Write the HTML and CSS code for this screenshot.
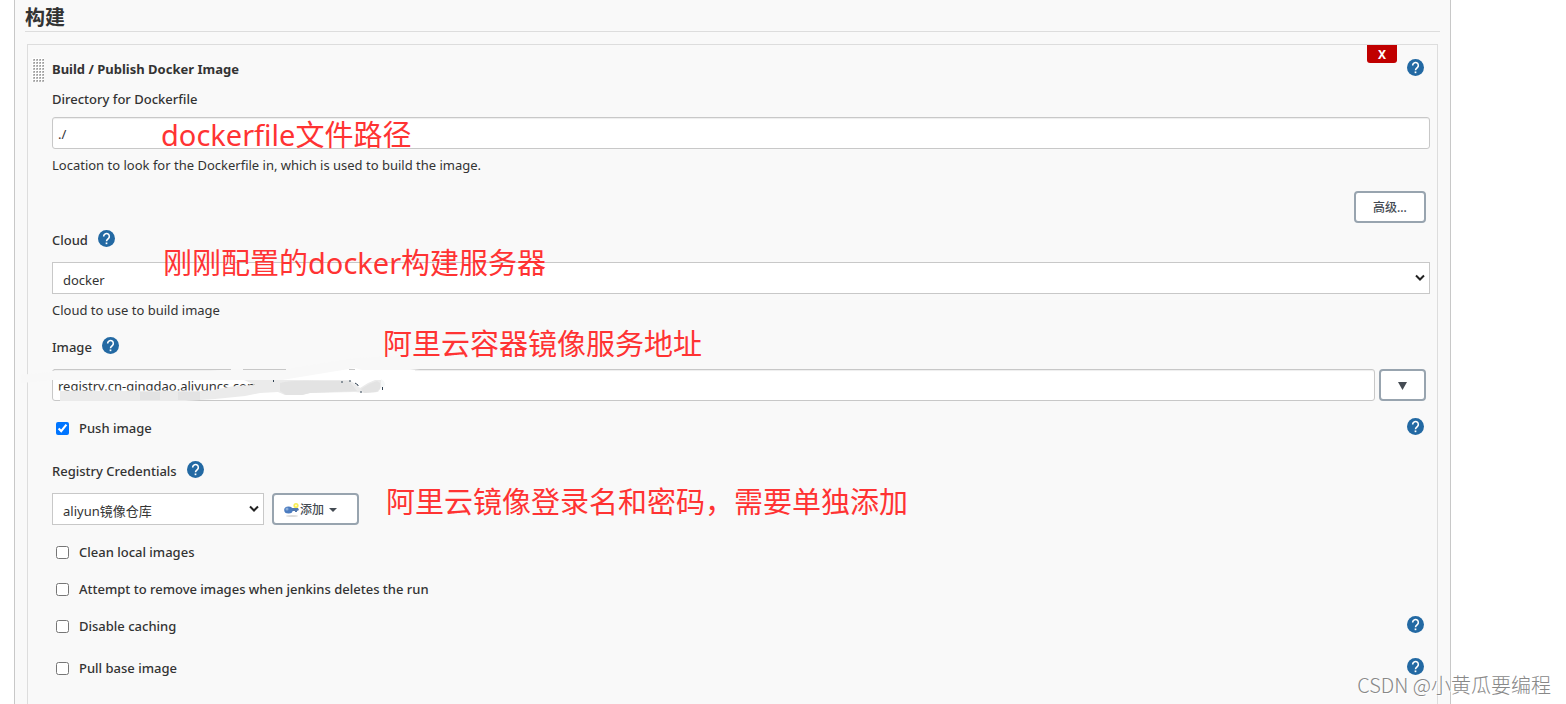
FILE: index.html
```html
<!DOCTYPE html>
<html lang="zh-CN">
<head>
<meta charset="utf-8">
<title>构建</title>
<link rel="stylesheet" href="styles.css">
</head>
<body>
<svg class="defs" aria-hidden="true">
  <symbol id="help" viewBox="0 0 24 24">
    <circle cx="12" cy="12" r="12" fill="#2369a3"/>
    <path d="M8 9.200a4 4 0 1 1 6.600 2.900c-1.700 1.400-2.600 1.900-2.600 3.700" fill="none" stroke="#fff" stroke-width="2.200"/>
    <rect x="10.800" y="17.600" width="2.400" height="2.400" fill="#fff"/>
  </symbol>
</svg>
<main class="panel">
  <h1 class="section-title">构建</h1>
  <form class="step">
    <button type="button" class="remove">X</button>
    <div class="row title-row">
      <svg class="grip" viewBox="0 0 12 24" aria-hidden="true">
        <defs><pattern id="dots" width="3" height="3" patternUnits="userSpaceOnUse"><path fill="#fff" d="M0 0h3v3H0z"/><path fill="#bbb" d="M1 1h2v2H1z"/><path fill="#999" d="M2 1h1v1H2z"/></pattern></defs>
        <path fill="url(#dots)" d="M0 0h12v24H0z"/>
      </svg>
      <h2 class="step-title">Build / Publish Docker Image</h2>
      <a class="help end" href="#" aria-label="Help"><svg><use href="#help"/></svg></a>
    </div>

    <div class="row label-row"><label for="dir">Directory for Dockerfile</label></div>
    <div class="control">
      <input id="dir" class="text" type="text" value="./">
      <span class="note note-dir">dockerfile文件路径</span>
    </div>
    <p class="hint">Location to look for the Dockerfile in, which is used to build the image.</p>
    <div class="actions"><button type="button" class="btn advanced">高级...</button></div>

    <div class="row"><label for="cloud">Cloud</label><a class="help" href="#" aria-label="Help"><svg><use href="#help"/></svg></a></div>
    <div class="control cloud-control">
      <select id="cloud" class="select"><option>docker</option></select>
      <svg class="chevron" viewBox="0 0 10 8"><path d="M1 1.500l4 4 4-4"/></svg>
      <span class="note note-cloud">刚刚配置的docker构建服务器</span>
    </div>
    <p class="hint">Cloud to use to build image</p>

    <div class="row image-label"><label for="image">Image</label><a class="help" href="#" aria-label="Help"><svg><use href="#help"/></svg></a></div>
    <div class="control image-control">
      <input id="image" class="text" type="text" value="registry.cn-qingdao.aliyuncs.com">
      <button type="button" class="btn expand" aria-label="Expand"><svg viewBox="0 0 9 8"><path d="M0 0h9L4.500 8z"/></svg></button>
      <svg class="smear" viewBox="0 0 400 50" aria-hidden="true">
        <path fill="#f8f8f8" d="M0 20Q16 18 32 17V16H190L211 14H223L266 14 335 3 400 0V14L380 16 345 19 300 25H32L2 28z"/>
        <path fill="#fff" d="M34 25H262L335 13 342 15 395 15V24L345 27 300 26 240 26H34z"/>
        <path fill="#fff" d="M38 35.500H236V27L244 26H370V38H240L230 44H38z"/>
        <path fill="#c8c8c8" d="M34 14H211V15H34zM223 14H266V15H223zM329 14H335V15H329z"/>
        <path fill="#ebebeb" d="M40 36H190Q210 30 235 30L224 25H329L334 28 340 33 348 28 355 25 361 25 362 31 358 37 345 38 335 37 290 38 282 40 265 40 258 37 240 38 225 41 195 44 165 46H40z"/>
        <path fill="#e3e3e3" d="M120 37h20v8h-20zM158 37h22v8h-22zM260 28Q270 25 300 26H329L337 36 290 38 282 40H266L260 36zM341 34l8-5 8-3 3 2v6l-4 3-12 1z"/>
        <path fill="#f6f8f8" d="M361 24q4 2 4 6l-3 4-1-3z"/>
        <path fill="none" stroke="#345" d="M253.500 25v2M321 27h2M329 26h2M335 28l3 2v1M341 36v2M362.500 32v3"/>
      </svg>
      <span class="note note-image">阿里云容器镜像服务地址</span>
    </div>

    <div class="row check push"><input id="push" type="checkbox" checked><label for="push">Push image</label><a class="help end" href="#" aria-label="Help"><svg><use href="#help"/></svg></a></div>

    <div class="row cred-label"><label for="cred">Registry Credentials</label><a class="help" href="#" aria-label="Help"><svg><use href="#help"/></svg></a></div>
    <div class="control cred-control">
      <div class="cred-select">
        <select id="cred" class="select"><option>aliyun镜像仓库</option></select>
        <svg class="chevron" viewBox="0 0 10 8"><path d="M1 1.500l4 4 4-4"/></svg>
      </div>
      <button type="button" class="btn add">
        <svg class="key" viewBox="0 0 16 16"><ellipse cx="8" cy="14" rx="6" ry="1" fill="#ddd"/><path d="M5 6h9l1 2-2 1v1h-2V9H7z" fill="#5378ad"/><ellipse cx="4.500" cy="8" rx="4.300" ry="3.500" fill="#4c7cc0"/><circle cx="3" cy="7" r="1.500" fill="#8badd8"/><circle cx="12" cy="3.500" r="2.600" fill="#f8ed55"/><circle cx="12" cy="3.500" r="1" fill="#fffbd0"/></svg>
        <span>添加</span>
        <svg class="caret" viewBox="0 0 8 4"><path d="M0 0h8L4 4z"/></svg>
      </button>
      <span class="note note-cred">阿里云镜像登录名和密码，需要单独添加</span>
    </div>

    <div class="row check clean"><input id="clean" type="checkbox"><label for="clean">Clean local images</label></div>
    <div class="row check"><input id="attempt" type="checkbox"><label for="attempt">Attempt to remove images when jenkins deletes the run</label></div>
    <div class="row check"><input id="cache" type="checkbox"><label for="cache">Disable caching</label><a class="help end" href="#" aria-label="Help"><svg><use href="#help"/></svg></a></div>
    <div class="row check pull"><input id="pull" type="checkbox"><label for="pull">Pull base image</label><a class="help end" href="#" aria-label="Help"><svg><use href="#help"/></svg></a></div>
  </form>
</main>
<div class="watermark">CSDN @小黄瓜要编程</div>
</body>
</html>
```
FILE: styles.css
```css
* { box-sizing: border-box; }

body {
  position: relative;
  margin: 0;
  background: #fff;
  color: #333;
  font: 13px/20px "Noto Sans", "Noto Sans CJK SC", sans-serif;
}

.defs { position: absolute; width: 0; height: 0; }

.panel {
  margin: 0 115px 0 14px;
  padding: 0 10px;
  border: solid #c8c8c8;
  border-width: 0 1px;
  background: #f9f9f9;
}

.section-title {
  margin: 0;
  padding: 5px 0 0;
  border-bottom: 1px solid #ddd;
  font-size: 20px;
  line-height: 26px;
}

.step {
  position: relative;
  margin: 12px 2px 0;
  padding: 14px 7px 26px 24px;
  border: solid #ddd;
  border-width: 1px 1px 0;
}

.remove {
  position: absolute;
  top: 0;
  right: 40px;
  width: 30px;
  height: 18px;
  padding: 0;
  border: 0;
  border-radius: 0 0 3px 3px;
  background: #c00000;
  color: #fff;
  font: bold 12px/20px "Noto Sans", sans-serif;
}

.row { display: flex; align-items: center; height: 20px; font-weight: 500; }
.title-row { position: relative; }
.label-row { margin-top: 10px; }
.step-title { margin: 0; font-size: 13px; font-weight: 700; }

.grip {
  position: absolute;
  left: -20px;
  top: -1px;
  width: 12px;
  height: 24px;
}

.help { display: block; height: 17px; margin: -3px 0 0 10px; }
.help svg { display: block; width: 17px; height: 17px; }
.help.end { margin-left: auto; margin-right: 6px; }

.control { position: relative; display: flex; margin-top: 8px; }

.text, .select {
  flex: 1;
  min-width: 0;
  width: 100%;
  height: 32px;
  margin: 0;
  border: 1px solid #c8c8c8;
  background: #fff;
  color: #333;
  font: inherit;
}

.text { padding: 2px 5px 0; border-radius: 3px; box-shadow: inset 0 1px 1px #eee; }
.select { padding: 3px 10px 0; border-radius: 0; appearance: none; }

.chevron { position: absolute; right: 5px; top: 12px; width: 10px; height: 8px; fill: none; stroke: #222; stroke-width: 2; }

.hint { margin: 6px 0 0; }

.btn {
  display: flex;
  align-items: center;
  justify-content: center;
  height: 32px;
  padding: 2px 0 0;
  border: 2px solid #98a4af;
  border-radius: 4px;
  background: #fff;
  color: #444b53;
  font: 500 12px/20px "Noto Sans", "Noto Sans CJK SC", sans-serif;
}

.actions { display: flex; justify-content: flex-end; margin: 16px 4px 7px 0; }
.advanced { width: 72px; }
.cloud-control { margin-top: 12px; }
.image-label { margin-top: 17px; }
.image-control { margin-top: 12px; gap: 4px; padding-right: 4px; }
.expand { width: 47px; }
.expand svg { width: 9px; height: 8px; fill: #444b53; }

.check { margin-top: 17px; padding-left: 4px; }
.check input { width: 13px; height: 13px; margin: 0 10px 0 0; }
.pull { margin-top: 22px; }

.cred-label { margin-top: 23px; }
.cred-control { margin-top: 12px; gap: 8px; }
.cred-select { position: relative; display: flex; width: 212px; }
.add { justify-content: flex-start; width: 87px; padding-left: 10px; }
.key { width: 16px; height: 16px; }
.caret { width: 8px; height: 4px; margin-left: 5px; fill: #444b53; }

.smear { position: absolute; left: -32px; top: -14px; width: 400px; height: 50px; pointer-events: none; }

.note {
  position: absolute;
  color: #ff3333;
  font-size: 29px;
  line-height: 40px;
  white-space: nowrap;
  pointer-events: none;
}
.note-dir { left: 109px; top: -2px; }
.note-cloud { left: 111px; top: -19px; }
.note-image { left: 331px; top: -45px; }
.note-cred { left: 334px; top: -11px; }

.watermark {
  position: absolute;
  right: 15px;
  bottom: 5px;
  color: #888;
  font: 300 20px/28px "Noto Sans CJK SC", sans-serif;
  text-shadow: 1px 1px 0 #fff;
  white-space: nowrap;
}
```
